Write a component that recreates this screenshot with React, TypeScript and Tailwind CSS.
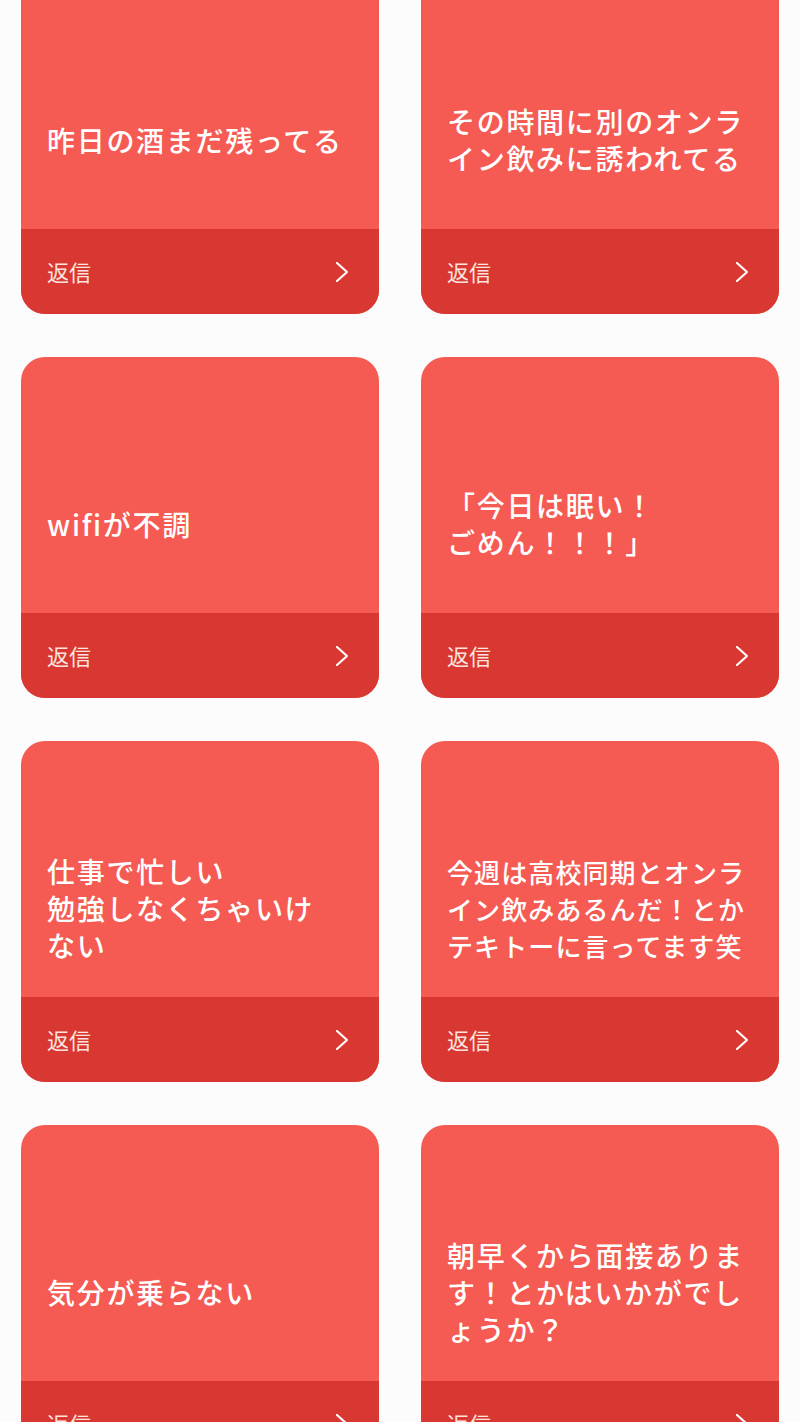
const items: { lines: string[]; small?: boolean }[] = [
  { lines: ['昨日の酒まだ残ってる'] },
  { lines: ['その時間に別のオンラ', 'イン飲みに誘われてる'] },
  { lines: ['wifiが不調'] },
  { lines: ['「今日は眠い！', 'ごめん！！！」'] },
  { lines: ['仕事で忙しい', '勉強しなくちゃいけ', 'ない'] },
  { lines: ['今週は高校同期とオンラ', 'イン飲みあるんだ！とか', 'テキトーに言ってます笑'], small: true },
  { lines: ['気分が乗らない'] },
  { lines: ['朝早くから面接ありま', 'す！とかはいかがでし', 'ょうか？'] },
];

function Chevron() {
  return (
    <svg width="14" height="22" viewBox="0 0 14 22" fill="none">
      <polyline
        points="2,2 12,11 2,20"
        stroke="white"
        strokeWidth="2.2"
        strokeLinecap="round"
        strokeLinejoin="round"
      />
    </svg>
  );
}

function Card({ lines, small }: { lines: string[]; small?: boolean }) {
  return (
    <div className="flex h-[341px] flex-col overflow-hidden rounded-[24px] bg-[#f55a53]">
      <div className="flex flex-1 flex-col justify-center pl-[26px] pr-[10px] pt-[78px]">
        {lines.map((l, i) => (
          <div
            key={i}
            className={
              small
                ? 'whitespace-nowrap text-[26px] font-medium leading-[37px] tracking-[1.1px] text-white'
                : 'whitespace-nowrap text-[28px] font-medium leading-[37px] tracking-[1.7px] text-white'
            }
          >
            {l}
          </div>
        ))}
      </div>
      <div className="flex h-[85px] items-center justify-between bg-[#d93732] pl-[26px] pr-[30px]">
        <span className="text-[22px] text-[#fde3df]">返信</span>
        <Chevron />
      </div>
    </div>
  );
}

export default function App() {
  return (
    <div
      className="h-[1422px] w-[800px] overflow-hidden bg-[#fcfcfc]"
      style={{ fontFamily: '"Noto Sans CJK JP", "Noto Sans", sans-serif' }}
    >
      <div className="mt-[-27px] grid grid-cols-2 gap-x-[42px] gap-y-[43px] px-[21px]">
        {items.map((it, i) => (
          <Card key={i} lines={it.lines} small={it.small} />
        ))}
      </div>
    </div>
  );
}
